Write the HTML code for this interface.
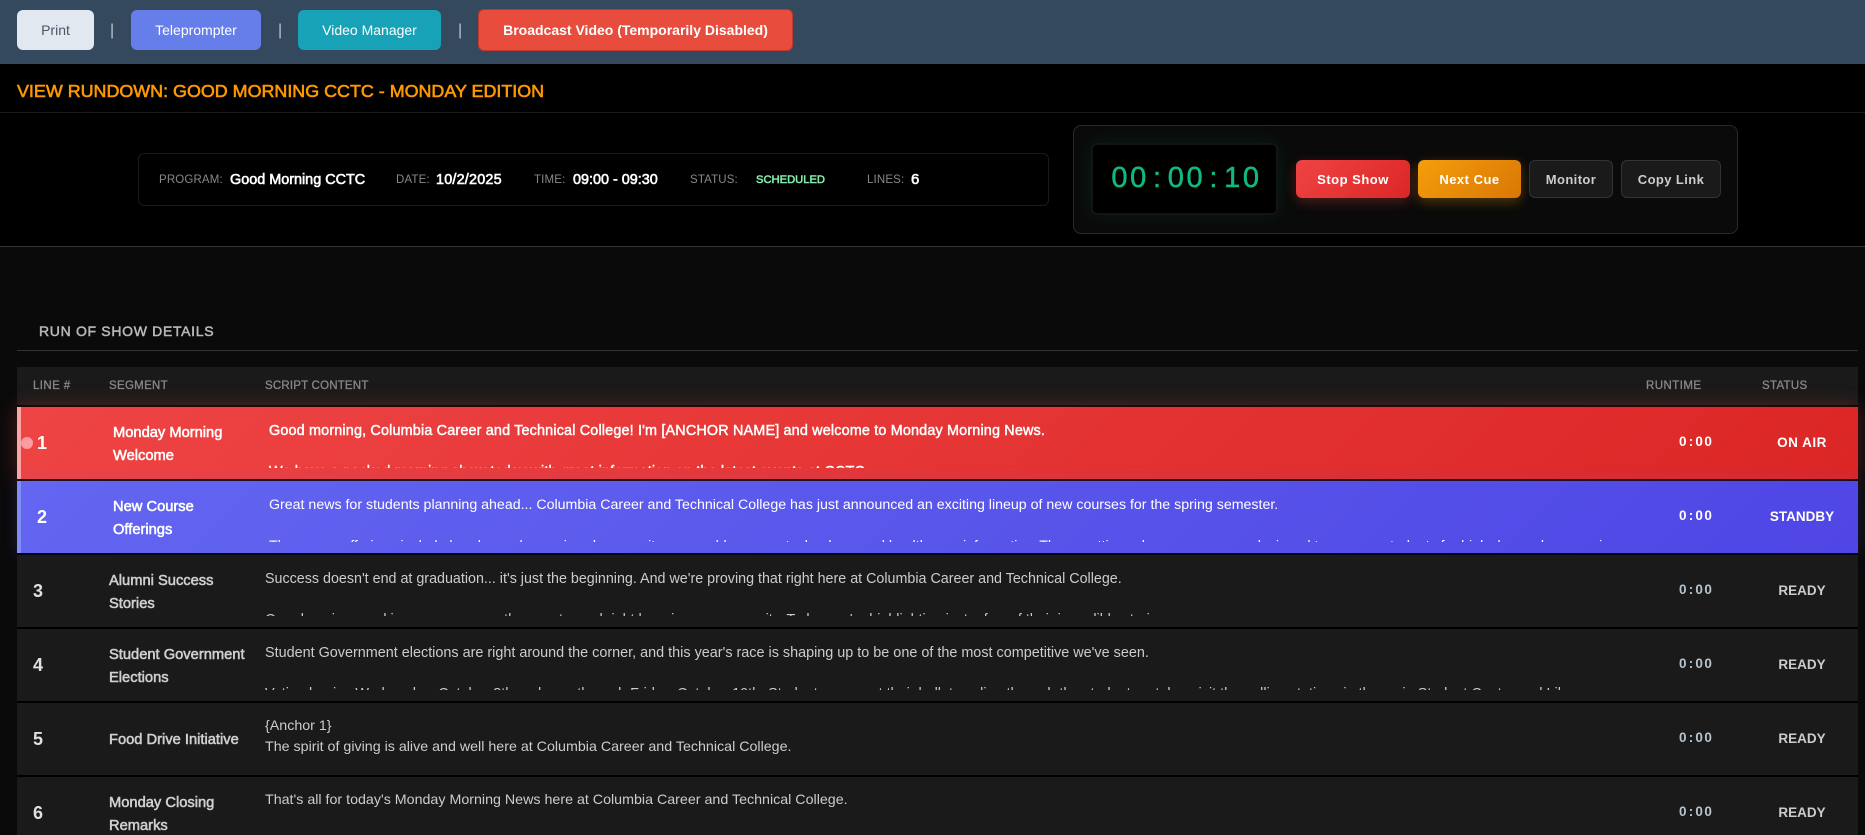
<!DOCTYPE html>
<html lang="en"><head><meta charset="utf-8"><title>View Rundown</title>
<style>
*{box-sizing:border-box;margin:0;padding:0}
html,body{width:1865px;height:835px;overflow:hidden;background:#0a0a0a;font-family:"Liberation Sans",Arial,sans-serif}
body{position:relative}
.a,.t{position:absolute}
.t{white-space:nowrap;line-height:20px}
.btn{position:absolute;display:flex;align-items:center;justify-content:center;border-radius:6px;font-size:14px;white-space:nowrap}
.sep{position:absolute;top:20px;color:#bdc3c7;font-size:16px;line-height:22px}
.lb{font-size:11.5px;color:#888;top:169.5px;letter-spacing:.15px}
.vl{font-size:14.4px;color:#fff;-webkit-text-stroke:.6px #fff;top:170px}
.cb{top:160px;height:38px;font-size:13px;font-weight:700;letter-spacing:.5px;border-radius:6px}
.th{top:376px;font-size:11.5px;color:#888;letter-spacing:.3px;-webkit-text-stroke:.3px #888}
.row{position:absolute;left:17px;width:1841px;height:72px;background:#1a1a1a}
.num{font-size:18px;font-weight:700;color:#e0e0e0;top:581px}
.seg{position:absolute;font-size:14.7px;color:#d0d0d0;-webkit-text-stroke:.55px #d0d0d0;line-height:23px;white-space:nowrap}
.seg.w{-webkit-text-stroke:.55px #fff}
.scr{position:absolute;height:47px;width:1400px;overflow:hidden;font-size:14.25px;color:#ccc;line-height:20.5px;white-space:nowrap}
.rt{position:absolute;left:1679px;font-size:13.5px;font-weight:700;color:#b8c4cc;letter-spacing:1.4px;line-height:20px}
.rt span{margin:0 .8px}
.st{position:absolute;left:1742px;width:120px;text-align:center;font-size:13.5px;font-weight:700;color:#ccc;line-height:20px}
.w{color:#fff}
.clk{position:absolute;left:1110px;top:164px;line-height:28px;font-size:29px;color:#10b981;-webkit-text-stroke:.5px #10b981;display:flex}
.clk span{display:block;width:18.8px;text-align:center}
</style></head><body>

<div class="a" style="left:0;top:0;width:1865px;height:64px;background:#34495e"></div>
<div class="btn" style="left:17px;top:10px;width:77px;height:40px;background:#e2e8f0;color:#4a5568">Print</div>
<div class="sep" style="left:110px">|</div>
<div class="btn" style="left:131px;top:10px;width:130px;height:40px;background:#667eea;color:#fff">Teleprompter</div>
<div class="sep" style="left:278px">|</div>
<div class="btn" style="left:298px;top:10px;width:143px;height:40px;background:#17a2b8;color:#fff">Video Manager</div>
<div class="sep" style="left:458px">|</div>
<div class="btn" style="left:478px;top:9px;width:315px;height:42px;background:#e74c3c;border:1px solid #c0392b;color:#fff;font-weight:700">Broadcast Video (Temporarily Disabled)</div>

<div class="a" style="left:0;top:64px;width:1865px;height:182px;background:#000"></div>
<div class="t" style="left:17px;top:80.5px;font-size:17.9px;color:#ff9800;-webkit-text-stroke:.6px #ff9800">VIEW RUNDOWN: GOOD MORNING CCTC - MONDAY EDITION</div>
<div class="a" style="left:0;top:112px;width:1865px;height:1px;background:#1a1a1a"></div>
<div class="a" style="left:0;top:246px;width:1865px;height:1px;background:#333"></div>

<div class="a" style="left:138px;top:153px;width:911px;height:53px;border:1px solid #1a1a1a;border-radius:6px"></div>
<div class="t lb" style="left:159px">PROGRAM:</div>
<div class="t vl" style="left:230px">Good Morning CCTC</div>
<div class="t lb" style="left:396px">DATE:</div>
<div class="t vl" style="left:436px;letter-spacing:.2px">10/2/2025</div>
<div class="t lb" style="left:534px">TIME:</div>
<div class="t vl" style="left:573px">09:00 - 09:30</div>
<div class="t lb" style="left:690px">STATUS:</div>
<div class="t" style="left:756px;top:169.5px;font-size:11.2px;color:#86efac;-webkit-text-stroke:.5px #86efac">SCHEDULED</div>
<div class="t lb" style="left:867px">LINES:</div>
<div class="t vl" style="left:911px;font-size:15px">6</div>

<div class="a" style="left:1073px;top:125px;width:665px;height:109px;background:#0a0a0a;border:1px solid #2a2a2a;border-radius:8px"></div>
<div class="a" style="left:1091px;top:143px;width:187px;height:72px;background:#000;border:2px solid #141414;border-radius:6px;box-shadow:0 0 20px rgba(16,185,129,.12)"></div>
<div class="clk"><span>0</span><span>0</span><span>:</span><span>0</span><span>0</span><span>:</span><span>1</span><span>0</span></div>
<div class="btn cb" style="left:1296px;width:114px;background:linear-gradient(135deg,#ef4444,#dc2626);color:#fff;box-shadow:0 4px 12px rgba(239,68,68,.3)">Stop Show</div>
<div class="btn cb" style="left:1418px;width:103px;background:linear-gradient(135deg,#f59e0b,#d97706);color:#fff;box-shadow:0 4px 12px rgba(245,158,11,.3)">Next Cue</div>
<div class="btn cb" style="left:1529px;width:84px;background:#1a1a1a;border:1px solid #333;color:#ccc;letter-spacing:.4px">Monitor</div>
<div class="btn cb" style="left:1621px;width:100px;background:#1a1a1a;border:1px solid #333;color:#ccc;letter-spacing:.4px">Copy Link</div>

<div class="t" style="left:39px;top:320.5px;font-size:14px;color:#b8b8b8;-webkit-text-stroke:.5px #b8b8b8;letter-spacing:.68px">RUN OF SHOW DETAILS</div>
<div class="a" style="left:17px;top:350px;width:1841px;height:1px;background:#333"></div>

<div class="a" style="left:17px;top:367px;width:1841px;height:468px;background:#000"></div>
<div class="a" style="left:17px;top:367px;width:1841px;height:38px;background:#1a1a1a"></div>
<div class="t th" style="left:33px;letter-spacing:.4px">LINE #</div>
<div class="t th" style="left:109px">SEGMENT</div>
<div class="t th" style="left:265px;letter-spacing:.2px">SCRIPT CONTENT</div>
<div class="t th" style="left:1646px;letter-spacing:.45px">RUNTIME</div>
<div class="t th" style="left:1762px">STATUS</div>

<div class="row" style="top:407px;background:linear-gradient(135deg,#ef4444,#dc2626);border-left:4px solid #fca5a5;box-shadow:0 0 20px rgba(239,68,68,.3)"></div>
<div class="row" style="top:481px;background:linear-gradient(135deg,#6366f1,#4f46e5);border-left:4px solid #818cf8;box-shadow:0 0 15px rgba(99,102,241,.2)"></div>
<div class="row" style="top:555px"></div>
<div class="row" style="top:629px"></div>
<div class="row" style="top:703px"></div>
<div class="row" style="top:777px"></div>

<div class="a" style="left:21px;top:437px;width:12px;height:12px;border-radius:50%;background:#fb9da0"></div>
<div class="t num w" style="left:37px;top:433px">1</div>
<div class="t num w" style="left:37px;top:507px">2</div>
<div class="t num" style="left:33px">3</div>
<div class="t num" style="left:33px;top:655px">4</div>
<div class="t num" style="left:33px;top:729px">5</div>
<div class="t num" style="left:33px;top:803px">6</div>

<div class="seg w" style="left:113px;top:422px">Monday Morning<br>Welcome</div>
<div class="seg w" style="left:113px;top:496px">New Course<br>Offerings</div>
<div class="seg" style="left:109px;top:570px">Alumni Success<br>Stories</div>
<div class="seg" style="left:109px;top:644px">Student Government<br>Elections</div>
<div class="seg" style="left:109px;top:729px">Food Drive Initiative</div>
<div class="seg" style="left:109px;top:792px">Monday Closing<br>Remarks</div>

<div class="scr w" style="left:269px;top:421px;font-size:14.4px;letter-spacing:.16px;-webkit-text-stroke:.45px #fff">Good morning, Columbia Career and Technical College! I'm [ANCHOR NAME] and welcome to Monday Morning News.<br><br>We have a packed morning show today with great information on the latest events at CCTC.</div>
<div class="scr w" style="left:269px;top:495px;font-size:14.2px">Great news for students planning ahead... Columbia Career and Technical College has just announced an exciting lineup of new courses for the spring semester.<br><br>These new offerings include hands-on classes in cybersecurity, renewable energy technology, and health care informatics. These cutting-edge courses were designed to prepare students for high-demand careers in</div>
<div class="scr" style="left:265px;top:569px;font-size:14.3px">Success doesn't end at graduation... it's just the beginning. And we're proving that right here at Columbia Career and Technical College.<br><br>Our alumni are making waves across the country and right here in our community. Today, we're highlighting just a few of their incredible stories.</div>
<div class="scr" style="left:265px;top:643px;font-size:14.4px">Student Government elections are right around the corner, and this year's race is shaping up to be one of the most competitive we've seen.<br><br>Voting begins Wednesday, October 8th and runs through Friday, October 10th. Students can cast their ballots online through the student portal or visit the polling stations in the main Student Center and Library.</div>
<div class="scr" style="left:265px;top:716px">{Anchor 1}<br>The spirit of giving is alive and well here at Columbia Career and Technical College.</div>
<div class="scr" style="left:265px;top:790px">That's all for today's Monday Morning News here at Columbia Career and Technical College.</div>

<div class="rt w" style="top:432px">0<span>:</span>00</div>
<div class="rt w" style="top:506px">0<span>:</span>00</div>
<div class="rt" style="top:580px">0<span>:</span>00</div>
<div class="rt" style="top:654px">0<span>:</span>00</div>
<div class="rt" style="top:728px">0<span>:</span>00</div>
<div class="rt" style="top:802px">0<span>:</span>00</div>

<div class="st w" style="top:433px;letter-spacing:.5px">ON AIR</div>
<div class="st w" style="top:507px">STANDBY</div>
<div class="st" style="top:581px">READY</div>
<div class="st" style="top:655px">READY</div>
<div class="st" style="top:729px">READY</div>
<div class="st" style="top:803px">READY</div>
</body></html>
